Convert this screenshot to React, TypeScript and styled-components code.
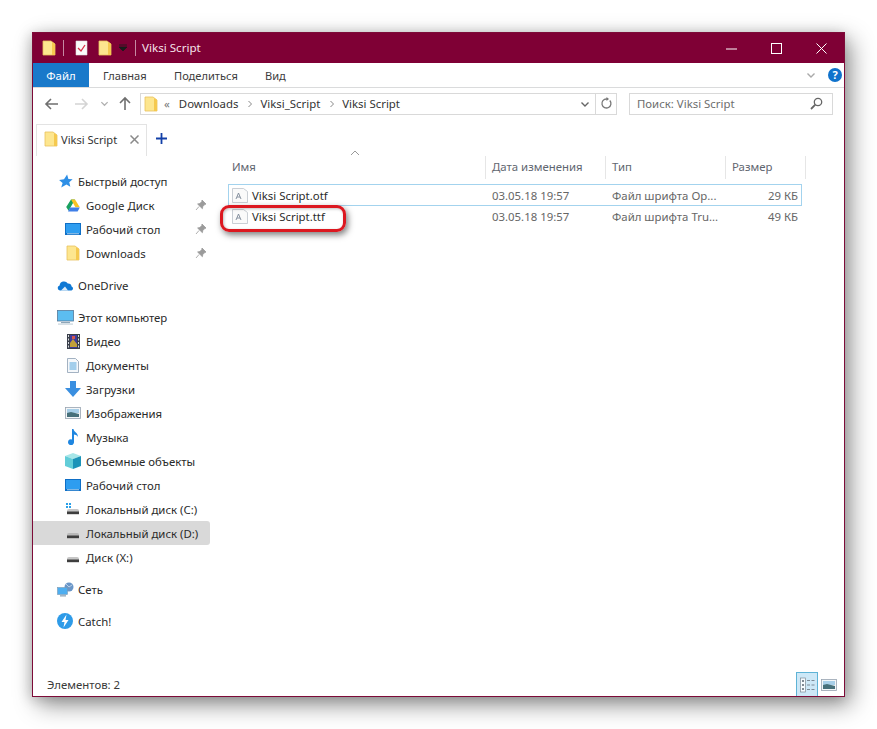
import React from 'react';
import styled, { createGlobalStyle } from 'styled-components';

const GlobalStyle = createGlobalStyle`
  html, body { margin: 0; padding: 0; background: #fff; }
  body { font-family: "Noto Sans", "Open Sans", "Liberation Sans", sans-serif; font-size: 11.4px; color: #2b2b2b; }
`;

const Page = styled.div`
  width: 877px;
  height: 729px;
  padding: 32px 0 0 32px;
  box-sizing: border-box;
  overflow: hidden;
`;

const Window = styled.div`
  position: relative;
  width: 813px;
  height: 665px;
  box-sizing: border-box;
  border: 1px solid #7d0b38;
  background: #fff;
  display: flex;
  flex-direction: column;
  box-shadow: 6px 8px 22px rgba(0, 0, 0, 0.42), -2px 2px 12px rgba(0, 0, 0, 0.18);
`;

const TitleBar = styled.div`
  height: 30px;
  flex: none;
  background: #7f0035;
  color: #f6e4ea;
  display: flex;
  align-items: center;
  padding-left: 9px;
`;

const QuickGroup = styled.div`
  display: flex;
  align-items: center;
`;

const QuickGap = styled.span<{ $w: number }>`
  width: ${(p) => p.$w}px;
`;

const TitleSep = styled.span<{ $gap?: number }>`
  width: 1px;
  height: 16px;
  background: #c58aa2;
  margin: 0 ${(p) => p.$gap ?? 11}px 0 7px;
`;

const TitleText = styled.span`
  font-size: 11.6px;
  line-height: 16px;
`;

const WindowButtons = styled.div`
  margin-left: auto;
  display: flex;
  height: 100%;
`;

const WindowButton = styled.div`
  width: 45px;
  display: flex;
  align-items: center;
  justify-content: center;
`;

const Ribbon = styled.div`
  height: 24px;
  flex: none;
  display: flex;
  align-items: stretch;
  border-bottom: 1px solid #dadbdc;
`;

const FileTab = styled.div`
  width: 56px;
  background: #1979ca;
  color: #fff;
  display: flex;
  align-items: center;
  justify-content: center;
`;

const RibbonTab = styled.div<{ $w: number }>`
  width: ${(p) => p.$w}px;
  display: flex;
  align-items: center;
  padding-left: 14px;
  box-sizing: border-box;
  color: #3c3c3c;
  font-size: 11.1px;
`;

const RibbonRight = styled.div`
  margin-left: auto;
  display: flex;
  align-items: center;
  gap: 12px;
  padding-right: 2px;
`;

const HelpDot = styled.div`
  width: 14px;
  height: 14px;
  border-radius: 50%;
  background: #0f72cc;
  color: #fff;
  font-weight: 700;
  font-size: 11px;
  line-height: 14px;
  text-align: center;
`;

const AddressRow = styled.div`
  height: 31px;
  flex: none;
  display: flex;
  align-items: center;
  padding-left: 11px;
  box-sizing: border-box;
`;

const NavButton = styled.div<{ $w: number; $gap?: number }>`
  width: ${(p) => p.$w}px;
  margin-left: ${(p) => p.$gap ?? 0}px;
  display: flex;
  justify-content: center;
  align-items: center;
`;

const AddressBox = styled.div`
  margin-left: 2px;
  width: 477px;
  height: 22px;
  box-sizing: border-box;
  border: 1px solid #d9d9d9;
  display: flex;
  align-items: center;
  padding-left: 3px;
  color: #333;
`;

const CrumbMore = styled.span`
  margin: 0 9px 0 6px;
  color: #777;
`;

const Crumb = styled.span`
  margin-right: 8px;
  white-space: nowrap;
`;

const CrumbSep = styled.span`
  display: flex;
  margin-right: 6px;
`;

const AddressEnd = styled.div`
  margin-left: auto;
  display: flex;
  align-items: center;
  height: 100%;
`;

const AddressCell = styled.div<{ $line?: boolean }>`
  width: 20px;
  height: 100%;
  display: flex;
  align-items: center;
  justify-content: center;
  border-left: ${(p) => (p.$line ? '1px solid #d9d9d9' : 'none')};
`;

const SearchBox = styled.div`
  margin-left: 12px;
  width: 204px;
  height: 22px;
  box-sizing: border-box;
  border: 1px solid #d9d9d9;
  display: flex;
  align-items: center;
  justify-content: space-between;
  padding: 0 9px 0 7px;
  color: #6d6d6d;
`;

const TabStrip = styled.div`
  height: 37px;
  flex: none;
  display: flex;
  align-items: flex-end;
  padding-left: 3px;
`;

const FolderTab = styled.div`
  width: 111px;
  height: 32px;
  box-sizing: border-box;
  border: 1px solid #e3e3e3;
  border-bottom: none;
  display: flex;
  align-items: center;
  padding: 0 0 3px 7px;
  gap: 3px;
  color: #333;
  font-size: 11.1px;
`;

const TabClose = styled.span`
  margin-left: auto;
  margin-right: 7px;
  display: flex;
`;

const TabPlus = styled.div`
  width: 28px;
  height: 32px;
  padding-bottom: 3px;
  box-sizing: border-box;
  display: flex;
  align-items: center;
  justify-content: center;
`;

const Body = styled.div`
  flex: 1;
  display: flex;
  min-height: 0;
`;

const Sidebar = styled.div`
  width: 177px;
  flex: none;
  padding-top: 13px;
  display: flex;
  flex-direction: column;
`;

const NavGroup = styled.div`
  margin-bottom: 8px;
`;

const NavRow = styled.div<{ $child?: boolean; $active?: boolean }>`
  height: 24px;
  display: flex;
  align-items: center;
  padding-left: ${(p) => (p.$child ? 31 : 23)}px;
  background: ${(p) => (p.$active ? '#d9d9d9' : 'transparent')};
  border-radius: ${(p) => (p.$active ? '0 3px 3px 0' : '0')};
  color: #2a2a2a;
`;

const NavIcon = styled.span`
  width: 18px;
  height: 16px;
  margin-right: 4px;
  display: flex;
  align-items: center;
  justify-content: center;
  flex: none;
`;

const NavPin = styled.span`
  margin-left: auto;
  margin-right: 3px;
  display: flex;
`;

const Main = styled.div`
  flex: 1;
  min-width: 0;
  position: relative;
`;

const ColumnHeader = styled.div`
  height: 23px;
  display: flex;
  color: #5f6670;
  padding-left: 16px;
`;

const ColumnCell = styled.div<{ $w: number }>`
  width: ${(p) => p.$w}px;
  box-sizing: border-box;
  border-right: 1px solid #e6e6e6;
  padding-left: 6px;
  line-height: 22px;
  position: relative;
`;

const SortMark = styled.span`
  position: absolute;
  left: 124px;
  top: -6px;
  display: flex;
`;

const FileList = styled.div`
  margin: 5px 0 0 18px;
  width: 574px;
`;

const FileRow = styled.div<{ $selected?: boolean }>`
  height: 22px;
  margin-bottom: -1px;
  box-sizing: border-box;
  border: 1px solid ${(p) => (p.$selected ? '#a3d3ee' : 'transparent')};
  display: flex;
  align-items: center;
  color: #666;
`;

const FileName = styled.div`
  width: 254px;
  display: flex;
  align-items: center;
  color: #2b2b2b;
  padding-left: 3px;
  gap: 4px;
`;

const FileDate = styled.div`
  width: 120px;
  padding-left: 6px;
  box-sizing: border-box;
`;

const FileType = styled.div`
  width: 125px;
  padding-left: 6px;
  box-sizing: border-box;
  white-space: nowrap;
`;

const FileSize = styled.div`
  flex: 1;
  text-align: right;
  padding-right: 3px;
`;

const Callout = styled.div`
  position: absolute;
  left: 10px;
  top: 49px;
  width: 126px;
  height: 27px;
  box-sizing: border-box;
  border: 3px solid #dc1820;
  border-radius: 9px;
  box-shadow: 2px 3px 6px rgba(0, 0, 0, 0.5), inset 1px 1px 3px rgba(0, 0, 0, 0.25);
  pointer-events: none;
`;

const StatusBar = styled.div`
  height: 24px;
  flex: none;
  display: flex;
  align-items: center;
  padding-left: 14px;
  color: #3a3a3a;
`;

const ViewButtons = styled.div`
  margin-left: auto;
  display: flex;
  height: 100%;
  align-items: stretch;
  padding-right: 4px;
`;

const ViewButton = styled.div<{ $on?: boolean }>`
  width: 22px;
  box-sizing: border-box;
  display: flex;
  align-items: center;
  justify-content: center;
  background: ${(p) => (p.$on ? '#cde8f7' : 'transparent')};
  border: 1px solid ${(p) => (p.$on ? '#5eb3d6' : 'transparent')};
  border-bottom: none;
`;

const FolderIcon = () => (
  <svg width="14" height="16" viewBox="0 0 14 16">
    <path d="M1 1h8l4 3v11H1z" fill="#fde68f" stroke="#e8c25e" strokeWidth="0.8" />
    <path d="M10 2v13h3V4z" fill="#f5c94f" />
  </svg>
);

const Chevron = ({ color = '#777', size = 10 }: { color?: string; size?: number }) => (
  <svg width={size} height={size} viewBox="0 0 10 10">
    <path d="M1.500 3.500 5 7l3.500-3.500" fill="none" stroke={color} strokeWidth="1.400" />
  </svg>
);

const CrumbArrow = () => (
  <svg width="8" height="8" viewBox="0 0 8 8">
    <path d="M2.500 1 5.500 4l-3 3" fill="none" stroke="#888" />
  </svg>
);

const Arrow = ({ color, dir }: { color: string; dir: 'left' | 'right' | 'up' }) => {
  const d = { left: 'M14 8H2M7 3 2 8l5 5', right: 'M2 8h12M9 3l5 5-5 5', up: 'M8 14V2M3 7l5-5 5 5' }[dir];
  return (
    <svg width="16" height="16" viewBox="0 0 16 16">
      <path d={d} fill="none" stroke={color} strokeWidth="1.600" />
    </svg>
  );
};

const CheckDoc = () => (
  <svg width="13" height="16" viewBox="0 0 13 16">
    <path d="M1 1h11v14H1z" fill="#fbfbfb" stroke="#ddd" strokeWidth="0.600" />
    <path d="M3 8l3 3 4-6" fill="none" stroke="#d8324a" strokeWidth="1.300" />
  </svg>
);

const Star = () => (
  <svg width="15" height="15" viewBox="0 0 14 14">
    <path d="M8.500 .5l1.200 4.200 4 .3-3.200 2.700 1 4.300-3.600-2.300L3 12.500l1.300-4.200L1 5.500l4.600-.6z" fill="#2e8fe6" />
  </svg>
);

const GDrive = () => (
  <svg width="14" height="13" viewBox="0 0 14 13">
    <path d="M5 .5h4L4.600 8.200l-2 3.600L.2 8z" fill="#1aa260" />
    <path d="M9 .5l4.800 7.700H9.400L5 .5z" fill="#f7c325" />
    <path d="M4.200 8.500h9.600l-2.200 3.900H2z" fill="#3f7fe8" />
  </svg>
);

const Desktop = () => (
  <svg width="16" height="12" viewBox="0 0 16 12">
    <rect x="0" y="0" width="16" height="12" fill="#0f6fc6" />
    <rect x="1" y="1" width="14" height="9" fill="#2e9df0" />
    <rect x="2" y="10.400" width="12" height="0.800" fill="#cfe8fa" />
  </svg>
);

const Pin = () => (
  <svg width="12" height="12" viewBox="0 0 12 12">
    <path d="M7 1l4 4-1.200.5-2 2-.4 2.200L2.600 5l2.200-.4 2-2zM4 7.500 1 11" fill="#9b9b9b" stroke="#9b9b9b" strokeWidth="0.800" />
  </svg>
);

const Cloud = () => (
  <svg width="17" height="11" viewBox="0 0 17 11">
    <path d="M3 10.500A2.600 2.600 0 0 1 2.600 5.400 4.500 4.500 0 0 1 10.800 3.400 3.600 3.600 0 0 1 14.600 6.500 2.100 2.100 0 0 1 14.500 10.500z" fill="#0f78d4" />
    <path d="M4 10.500 8 6.500l3 4z" fill="#fff" opacity="0.850" />
  </svg>
);

const Computer = () => (
  <svg width="17" height="15" viewBox="0 0 17 15">
    <rect x="0.500" y="0.500" width="16" height="10.500" fill="#5cbdf0" stroke="#55799a" strokeWidth="0.800" />
    <rect x="4" y="12" width="9" height="1.200" fill="#8ea6b8" />
    <rect x="1" y="13.500" width="15" height="1.200" fill="#c6d3dc" />
  </svg>
);

const Film = () => (
  <svg width="13" height="15" viewBox="0 0 13 15">
    <rect width="13" height="15" fill="#3a3f4a" />
    <path d="M1 1h1v2H1zM1 4.500h1v2H1zM1 8h1v2H1zM1 11.500h1v2H1zM11 1h1v2h-1zM11 4.500h1v2h-1zM11 8h1v2h-1zM11 11.500h1v2h-1z" fill="#d8dce0" />
    <rect x="3" y="1" width="7" height="13" fill="#3f3c9e" />
    <path d="M3 9l3-4 4 5v3H3z" fill="#c2a13a" />
    <path d="M5 2h3v3H5z" fill="#d6574d" />
  </svg>
);

const DocIcon = () => (
  <svg width="12" height="15" viewBox="0 0 12 15">
    <path d="M.5.500h8l3 3v11H.500z" fill="#f5f8fb" stroke="#8da0b2" strokeWidth="0.800" />
    <path d="M2.500 5h7M2.500 7h7M2.500 9h7M2.500 11h7" stroke="#3f9bd8" strokeWidth="0.900" />
  </svg>
);

const DownArrow = () => (
  <svg width="16" height="16" viewBox="0 0 16 16">
    <path d="M5 0h6v7h5l-8 9-8-9h5z" fill="#3a8fe0" />
  </svg>
);

const PictureIcon = () => (
  <svg width="16" height="12" viewBox="0 0 16 12">
    <rect x="0.500" y="0.500" width="15" height="11" fill="#f4f6f8" stroke="#97a4b0" strokeWidth="0.800" />
    <rect x="2" y="2" width="12" height="4" fill="#a8cfe8" />
    <path d="M2 6l4-1 4 1 4 1v3H2z" fill="#47707a" />
  </svg>
);

const Note = () => (
  <svg width="11" height="16" viewBox="0 0 11 16">
    <path d="M4 0h1.500c.3 3 4.500 3.500 4.500 8-1-2-3-2.500-4-2.600V13a3 3 0 1 1-2-2.600z" fill="#1e86e0" />
  </svg>
);

const Cube = () => (
  <svg width="16" height="16" viewBox="0 0 16 16">
    <path d="M8 0l8 3-8 3-8-3z" fill="#a7e6e8" />
    <path d="M0 3l8 3v10l-8-3z" fill="#62cdd8" />
    <path d="M16 3 8 6v10l8-3z" fill="#1c93b8" />
  </svg>
);

const Drive = ({ win, dark }: { win?: boolean; dark?: boolean }) => (
  <svg width="14" height="12" viewBox="0 0 14 12">
    {win && <path d="M0 0h2v2H0zM3 0h2v2H3zM0 3h2v2H0zM3 3h2v2H3z" fill="#2aa0e8" />}
    <path d="M1 7.500Q1 6 3 6h8q2 0 2 1.500V11H1z" fill={dark ? '#b9b9b9' : '#c6c6c6'} />
    <rect x="1" y="8.500" width="12" height="2.700" fill="#3e3e3e" />
  </svg>
);

const Network = () => (
  <svg width="17" height="15" viewBox="0 0 17 15">
    <circle cx="12" cy="5" r="4.500" fill="#6a96c8" />
    <path d="M9 2l3 3 3-2" stroke="#dce9f4" fill="none" strokeWidth="0.700" />
    <rect x="0.500" y="5.500" width="10" height="7" fill="#4eaef0" stroke="#7a98b2" strokeWidth="0.600" />
    <rect x="3" y="13.200" width="6" height="1.300" fill="#8ea6b8" />
  </svg>
);

const Bolt = () => (
  <svg width="16" height="16" viewBox="0 0 16 16">
    <circle cx="8" cy="8" r="8" fill="#2e9be8" />
    <path d="M9.500 1.500 4.500 9h3L6.500 14.500 11.500 7h-3z" fill="#fff" />
  </svg>
);

const FontFile = () => (
  <svg width="16" height="15" viewBox="0 0 16 15">
    <path d="M.5.500h11l4 3v11H.500z" fill="#fafafa" stroke="#bcc3ca" strokeWidth="0.800" />
    <path d="M4 11l2.500-6L9 11M5 9h3" fill="none" stroke="#7a8796" strokeWidth="0.900" />
  </svg>
);

const DetailsView = () => (
  <svg width="15" height="16" viewBox="0 0 15 16">
    <rect x="0.500" y="1" width="5" height="14" fill="#f6fbfe" stroke="#7c8a96" strokeWidth="0.700" />
    <path d="M2 4h2M2 8h2M2 12h2" stroke="#5a6670" strokeWidth="1.300" />
    <path d="M7 3.500h3M11.500 3.500h3M7 8h3M11.500 8h3M7 12.500h3M11.500 12.500h3" stroke="#7c8a96" strokeWidth="1" />
  </svg>
);

const navGroups: { icon: React.ReactNode; label: string; child?: boolean; pin?: boolean; active?: boolean }[][] = [
  [
    { icon: <Star />, label: 'Быстрый доступ' },
    { icon: <GDrive />, label: 'Google Диск', child: true, pin: true },
    { icon: <Desktop />, label: 'Рабочий стол', child: true, pin: true },
    { icon: <FolderIcon />, label: 'Downloads', child: true, pin: true },
  ],
  [{ icon: <Cloud />, label: 'OneDrive' }],
  [
    { icon: <Computer />, label: 'Этот компьютер' },
    { icon: <Film />, label: 'Видео', child: true },
    { icon: <DocIcon />, label: 'Документы', child: true },
    { icon: <DownArrow />, label: 'Загрузки', child: true },
    { icon: <PictureIcon />, label: 'Изображения', child: true },
    { icon: <Note />, label: 'Музыка', child: true },
    { icon: <Cube />, label: 'Объемные объекты', child: true },
    { icon: <Desktop />, label: 'Рабочий стол', child: true },
    { icon: <Drive win />, label: 'Локальный диск (C:)', child: true },
    { icon: <Drive dark />, label: 'Локальный диск (D:)', child: true, active: true },
    { icon: <Drive />, label: 'Диск (X:)', child: true },
  ],
  [{ icon: <Network />, label: 'Сеть' }],
  [{ icon: <Bolt />, label: 'Catch!' }],
];

const files = [
  { name: 'Viksi Script.otf', type: 'Файл шрифта Op...', size: '29 КБ', selected: true },
  { name: 'Viksi Script.ttf', type: 'Файл шрифта Tru...', size: '49 КБ' },
];

export default function App() {
  return (
    <Page>
      <GlobalStyle />
      <Window>
        <TitleBar>
          <QuickGroup>
            <FolderIcon />
            <TitleSep />
            <CheckDoc />
            <QuickGap $w={10} />
            <FolderIcon />
            <QuickGap $w={6} />
            <svg width="10" height="10" viewBox="0 0 10 10">
              <path d="M1 2h8M1 4l4 4 4-4z" stroke="#1b1b1b" fill="#1b1b1b" strokeWidth="0.800" />
            </svg>
            <TitleSep $gap={6} />
          </QuickGroup>
          <TitleText>Viksi Script</TitleText>
          <WindowButtons>
            <WindowButton>
              <svg width="11" height="11" viewBox="0 0 11 11"><path d="M0 6h11" stroke="#fff" /></svg>
            </WindowButton>
            <WindowButton>
              <svg width="11" height="11" viewBox="0 0 11 11"><rect x="0.500" y="0.500" width="10" height="10" fill="none" stroke="#fff" /></svg>
            </WindowButton>
            <WindowButton>
              <svg width="11" height="11" viewBox="0 0 11 11"><path d="M.5.500l10 10M10.500.500l-10 10" stroke="#fff" /></svg>
            </WindowButton>
          </WindowButtons>
        </TitleBar>

        <Ribbon>
          <FileTab>Файл</FileTab>
          <RibbonTab $w={71}>Главная</RibbonTab>
          <RibbonTab $w={91}>Поделиться</RibbonTab>
          <RibbonTab $w={60}>Вид</RibbonTab>
          <RibbonRight>
            <Chevron color="#a9a9a9" />
            <HelpDot>?</HelpDot>
          </RibbonRight>
        </Ribbon>

        <AddressRow>
          <NavButton $w={16}><Arrow color="#6f6f6f" dir="left" /></NavButton>
          <NavButton $w={30} $gap={6}><Arrow color="#d4d4d4" dir="right" /></NavButton>
          <NavButton $w={16}><Chevron color="#b0b0b0" size={9} /></NavButton>
          <NavButton $w={26}><Arrow color="#6f6f6f" dir="up" /></NavButton>
          <AddressBox>
            <FolderIcon />
            <CrumbMore>«</CrumbMore>
            <Crumb>Downloads</Crumb>
            <CrumbSep><CrumbArrow /></CrumbSep>
            <Crumb>Viksi_Script</Crumb>
            <CrumbSep><CrumbArrow /></CrumbSep>
            <Crumb>Viksi Script</Crumb>
            <AddressEnd>
              <AddressCell><Chevron color="#666" /></AddressCell>
              <AddressCell $line>
                <svg width="13" height="13" viewBox="0 0 13 13">
                  <path d="M9.800 3.500A4.500 4.500 0 1 1 6.500 2H8" fill="none" stroke="#777" strokeWidth="1.300" />
                  <path d="M6.500 0v4l2.500-2z" fill="#777" />
                </svg>
              </AddressCell>
            </AddressEnd>
          </AddressBox>
          <SearchBox>
            <span>Поиск: Viksi Script</span>
            <svg width="13" height="13" viewBox="0 0 13 13">
              <circle cx="8" cy="5" r="3.700" fill="none" stroke="#666" strokeWidth="1.300" />
              <path d="M5.300 7.700 1 12" stroke="#666" strokeWidth="1.800" />
            </svg>
          </SearchBox>
        </AddressRow>

        <TabStrip>
          <FolderTab>
            <FolderIcon />
            <span>Viksi Script</span>
            <TabClose>
              <svg width="9" height="9" viewBox="0 0 9 9"><path d="M.5.500l8 8M8.500.500l-8 8" stroke="#8a8a8a" strokeWidth="1.500" /></svg>
            </TabClose>
          </FolderTab>
          <TabPlus>
            <svg width="11" height="11" viewBox="0 0 11 11"><path d="M5.500 0v11M0 5.500h11" stroke="#1340a8" strokeWidth="1.800" /></svg>
          </TabPlus>
        </TabStrip>

        <Body>
          <Sidebar>
            {navGroups.map((group, i) => (
              <NavGroup key={i}>
                {group.map((row) => (
                  <NavRow key={row.label} $child={row.child} $active={row.active}>
                    <NavIcon>{row.icon}</NavIcon>
                    {row.label}
                    {row.pin && <NavPin><Pin /></NavPin>}
                  </NavRow>
                ))}
              </NavGroup>
            ))}
          </Sidebar>
          <Main>
            <ColumnHeader>
              <ColumnCell $w={260}>
                Имя
                <SortMark>
                  <svg width="10" height="6" viewBox="0 0 10 6"><path d="M1 5l4-4 4 4" fill="none" stroke="#999" /></svg>
                </SortMark>
              </ColumnCell>
              <ColumnCell $w={120}>Дата изменения</ColumnCell>
              <ColumnCell $w={120}>Тип</ColumnCell>
              <ColumnCell $w={80}>Размер</ColumnCell>
            </ColumnHeader>
            <FileList>
              {files.map((f) => (
                <FileRow key={f.name} $selected={f.selected}>
                  <FileName><FontFile />{f.name}</FileName>
                  <FileDate>03.05.18 19:57</FileDate>
                  <FileType>{f.type}</FileType>
                  <FileSize>{f.size}</FileSize>
                </FileRow>
              ))}
            </FileList>
            <Callout />
          </Main>
        </Body>

        <StatusBar>
          Элементов: 2
          <ViewButtons>
            <ViewButton $on><DetailsView /></ViewButton>
            <ViewButton><PictureIcon /></ViewButton>
          </ViewButtons>
        </StatusBar>
      </Window>
    </Page>
  );
}
